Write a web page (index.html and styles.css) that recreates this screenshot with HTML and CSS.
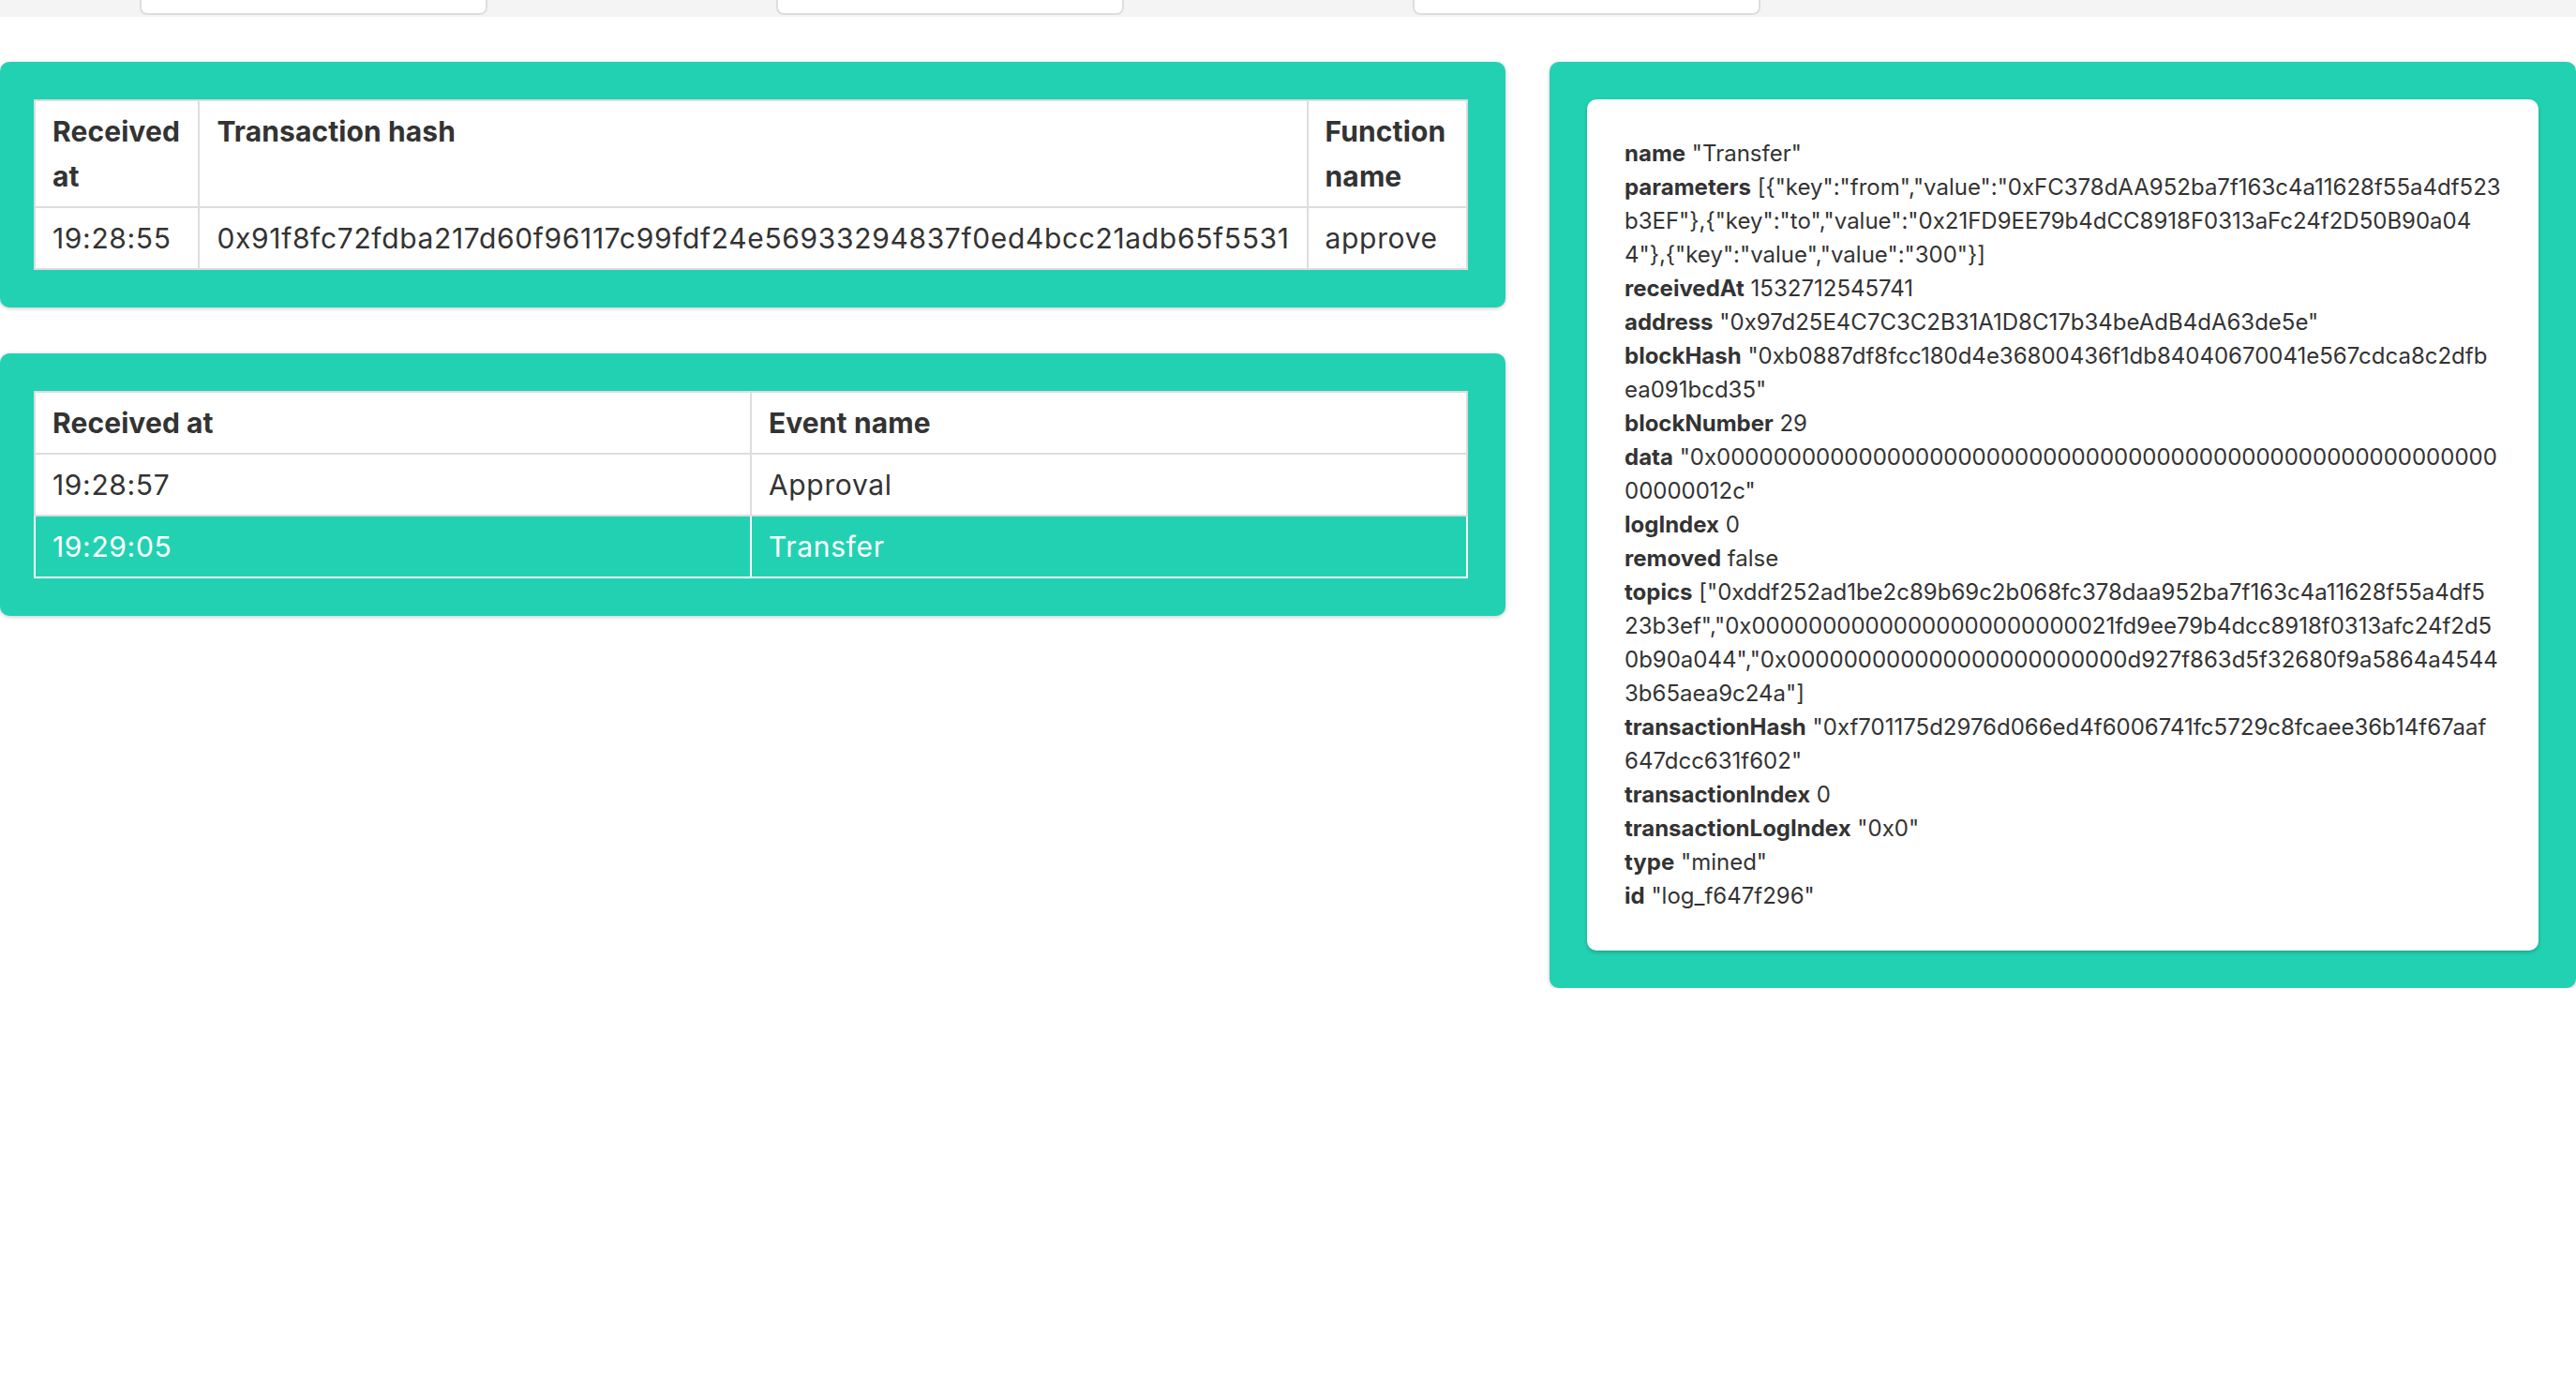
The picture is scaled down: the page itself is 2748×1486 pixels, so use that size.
FILE: index.html
```html
<!DOCTYPE html>
<html lang="en">
<head>
<meta charset="utf-8">
<title>Contract events</title>
<link rel="stylesheet" href="styles.css">
</head>
<body>
<nav class="tabbar">
  <div class="tab"></div>
  <div class="tab"></div>
  <div class="tab"></div>
</nav>
<main class="layout">
  <div class="left-col">
    <section class="panel">
      <table class="grid">
        <thead>
          <tr><th>Received at</th><th>Transaction hash</th><th>Function name</th></tr>
        </thead>
        <tbody>
          <tr><td>19:28:55</td><td>0x91f8fc72fdba217d60f96117c99fdf24e56933294837f0ed4bcc21adb65f5531</td><td>approve</td></tr>
        </tbody>
      </table>
    </section>
    <section class="panel">
      <table class="grid">
        <thead>
          <tr><th class="half">Received at</th><th>Event name</th></tr>
        </thead>
        <tbody>
          <tr><td>19:28:57</td><td>Approval</td></tr>
          <tr class="selected"><td>19:29:05</td><td>Transfer</td></tr>
        </tbody>
      </table>
    </section>
  </div>
  <section class="panel panel-detail">
    <div class="detail-card">
      <div class="entry"><b>name</b> "Transfer"</div>
      <div class="entry"><b>parameters</b> [{"key":"from","value":"0xFC378dAA952ba7f163c4a11628f55a4df523b3EF"},{"key":"to","value":"0x21FD9EE79b4dCC8918F0313aFc24f2D50B90a044"},{"key":"value","value":"300"}]</div>
      <div class="entry"><b>receivedAt</b> 1532712545741</div>
      <div class="entry"><b>address</b> "0x97d25E4C7C3C2B31A1D8C17b34beAdB4dA63de5e"</div>
      <div class="entry"><b>blockHash</b> "0xb0887df8fcc180d4e36800436f1db84040670041e567cdca8c2dfb<br>ea091bcd35"</div>
      <div class="entry"><b>blockNumber</b> 29</div>
      <div class="entry"><b>data</b> "0x000000000000000000000000000000000000000000000000000000000000012c"</div>
      <div class="entry"><b>logIndex</b> 0</div>
      <div class="entry"><b>removed</b> false</div>
      <div class="entry"><b>topics</b> ["0xddf252ad1be2c89b69c2b068fc378daa952ba7f163c4a11628f55a4df5<br>23b3ef","0x00000000000000000000000021fd9ee79b4dcc8918f0313afc24f2d5<br>0b90a044","0x000000000000000000000000d927f863d5f32680f9a5864a4544<br>3b65aea9c24a"]</div>
      <div class="entry"><b>transactionHash</b> "0xf701175d2976d066ed4f6006741fc5729c8fcaee36b14f67aaf<br>647dcc631f602"</div>
      <div class="entry"><b>transactionIndex</b> 0</div>
      <div class="entry"><b>transactionLogIndex</b> "0x0"</div>
      <div class="entry"><b>type</b> "mined"</div>
      <div class="entry"><b>id</b> "log_f647f296"</div>
    </div>
  </section>
</main>
</body>
</html>
```
FILE: styles.css
```css
html, body {
  margin: 0;
  padding: 0;
  background: #ffffff;
}

body {
  font-family: Inter, "Liberation Sans", sans-serif;
  color: #333333;
}

.tabbar {
  display: flex;
  gap: 308px;
  height: 18px;
  padding-left: 149px;
  background: #f4f4f4;
}

.tab {
  box-sizing: border-box;
  width: 371px;
  height: 16px;
  background: #ffffff;
  border: 2px solid #dddddd;
  border-top: 0;
  border-radius: 0 0 8px 8px;
}

.layout {
  display: grid;
  grid-template-columns: 1606px 1fr;
  column-gap: 47px;
  align-items: start;
  padding-top: 48px;
}

.left-col {
  display: flex;
  flex-direction: column;
  gap: 49px;
}

.panel {
  background: #22d1b2;
  border-radius: 10px;
  box-shadow: 0 1px 4px rgba(0, 0, 0, 0.22);
  padding: 40px 40px 40px 36px;
}

.panel-detail {
  padding: 40px;
}

.grid {
  width: 100%;
  border-collapse: collapse;
  background: #ffffff;
  font-size: 30px;
  line-height: 48px;
  letter-spacing: 0.65px;
}

.grid th,
.grid td {
  border: 2px solid #dddddd;
  padding: 8px 18px;
  text-align: left;
  vertical-align: top;
}

.grid th {
  font-weight: 700;
  letter-spacing: 0.1px;
}

.grid .half {
  width: 50%;
}

.grid tr.selected td {
  background: #22d1b2;
  color: #ffffff;
  border-color: #ffffff;
}

.detail-card {
  background: #ffffff;
  border-radius: 10px;
  box-shadow: 0 2px 4px rgba(0, 0, 0, 0.2);
  padding: 40px;
  font-size: 24px;
  line-height: 36px;
  word-break: break-all;
}

.entry b {
  font-weight: 700;
}
```
